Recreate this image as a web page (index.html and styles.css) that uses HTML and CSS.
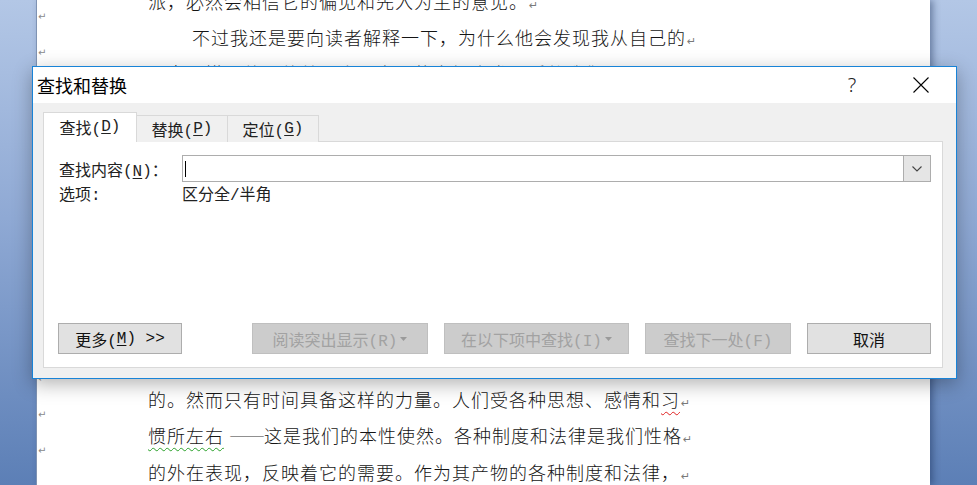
FILE: index.html
```html
<!DOCTYPE html>
<html lang="zh-CN">
<head>
<meta charset="utf-8">
<title>查找和替换</title>
<link rel="stylesheet" href="styles.css">
</head>
<body>
<div class="page">
  <div class="doc">
    <div class="line"><span class="pm"></span><span class="txt">派，必然会相信它的偏见和先入为主的意见。<span class="ret">↵</span></span></div>
    <div class="line"><span class="pm">↵</span><span class="txt indent">不过我还是要向读者解释一下，为什么他会发现我从自己的<span class="ret">↵</span></span></div>
    <div class="line"><span class="pm">↵</span><span class="txt">观点来描写他，他总是会从自己的立场出发来看待我们。<span class="ret">↵</span></span></div>
    <div class="line"><span class="pm"></span><span class="txt">我们每个人都是自己所处时代和环境的产物。<span class="ret">↵</span></span></div>
    <div class="line"><span class="pm"></span><span class="txt">这一点无论如何也改变不了。<span class="ret">↵</span></span></div>
    <div class="line"><span class="pm"></span><span class="txt">我们的思想和判断受到种种因素的影响。<span class="ret">↵</span></span></div>
    <div class="line"><span class="pm"></span><span class="txt">要摆脱这些影响，需要漫长的时间。<span class="ret">↵</span></span></div>
    <div class="line"><span class="pm"></span><span class="txt">一个民族的性格是在漫长的岁月中形成的。<span class="ret">↵</span></span></div>
    <div class="line"><span class="pm"></span><span class="txt">它的各种观念也是逐渐积累起来的。<span class="ret">↵</span></span></div>
    <div class="line"><span class="pm"></span><span class="txt">这些观念的改变同样需要时间。<span class="ret">↵</span></span></div>
    <div class="line"><span class="pm"></span><span class="txt">需要一代又一代人的努力，这是任何人都无法替代<span class="ret">↵</span></span></div>
    <div class="line"><span class="pm">↵</span><span class="txt">的。然而只有时间具备这样的力量。人们受各种思想、感情和<span class="wavy-red">习</span><span class="ret">↵</span></span></div>
    <div class="line"><span class="pm">↵</span><span class="txt"><span class="wavy-green">惯所左右</span> <span class="dash">——</span>这是我们的本性使然。各种制度和法律是我们性格<span class="ret">↵</span></span></div>
    <div class="line"><span class="pm">↵</span><span class="txt">的外在表现，反映着它的需要。作为其产物的各种制度和法律，<span class="ret">↵</span></span></div>
  </div>
</div>

<div class="dialog">
  <div class="titlebar">
    <span class="title">查找和替换</span>
    <span class="help">?</span>
    <span class="close">
      <svg width="16" height="16" viewBox="0 0 16 16"><path d="M0.5 0.5 L15.5 15.5 M15.5 0.5 L0.5 15.5" stroke="#000" stroke-width="1.1" fill="none"/></svg>
    </span>
  </div>
  <div class="body">
    <div class="tabs">
      <div class="tab active">查找(<u>D</u>)</div>
      <div class="tab">替换(<u>P</u>)</div>
      <div class="tab">定位(<u>G</u>)</div>
    </div>
    <div class="panel">
      <div class="row">
        <span class="label">查找内容(<u>N</u>)：</span>
        <div class="input">
          <span class="caret"></span>
          <span class="dd">
            <svg width="10" height="6" viewBox="0 0 10 6"><path d="M0.5 0.5 L5 5 L9.5 0.5" stroke="#444" stroke-width="1.1" fill="none"/></svg>
          </span>
        </div>
      </div>
      <div class="row opts">
        <span class="label">选项:</span>
        <span class="optval">区分全/半角</span>
      </div>
      <div class="buttons">
        <div class="btn w124">更多(<u>M</u>) &gt;&gt;</div>
        <div class="btn w176 dis push">阅读突出显示(R)<svg class="arr" width="7" height="4" viewBox="0 0 7 4"><path d="M0 0 H7 L3.5 4 Z" fill="#9a9a9a"/></svg></div>
        <div class="btn w185 dis">在以下项中查找(I)<svg class="arr" width="7" height="4" viewBox="0 0 7 4"><path d="M0 0 H7 L3.5 4 Z" fill="#9a9a9a"/></svg></div>
        <div class="btn w146 dis">查找下一处(F)</div>
        <div class="btn w124">取消</div>
      </div>
    </div>
  </div>
</div>
</body>
</html>
```

FILE: styles.css
```css
html, body {
  margin: 0;
  padding: 0;
}
body {
  width: 977px;
  height: 485px;
  overflow: hidden;
  position: relative;
  background: linear-gradient(to bottom, #b3c7e6 0%, #8fa9d4 45%, #5c7fb6 100%);
  font-family: "Noto Sans CJK SC", "Noto Sans", sans-serif;
}

/* background document page */
.page {
  margin-left: 37px;
  width: 893px;
  height: 485px;
  background: #fff;
  box-shadow: -1px 0 0 #7f93b3, 3px 0 7px rgba(20, 40, 80, 0.45);
  overflow: hidden;
}
.doc {
  margin-top: -17px;
  padding-left: 1px;
}
.line {
  height: 36.2px;
  display: flex;
  align-items: center;
}
.pm {
  width: 8px;
  height: 10px;
  flex: none;
  align-self: flex-start;
  font: 10px/10px "DejaVu Sans", sans-serif;
  color: #8a8a8a;
  margin-top: -7px;
}
.txt {
  margin-left: 102px;
  font-size: 18px;
  letter-spacing: 1px;
  color: #151515;
  white-space: nowrap;
  font-weight: 300;
}
.txt.indent {
  margin-left: 146px;
}
.ret {
  font: 11px "DejaVu Sans", sans-serif;
  color: #7a7a7a;
  letter-spacing: 0;
  margin-left: 1px;
}
.wavy-green {
  text-decoration: underline wavy #2aa02a;
  text-decoration-thickness: 1px;
  text-underline-offset: 4px;
}
.wavy-red {
  text-decoration: underline wavy #e02020;
  text-decoration-thickness: 1px;
  text-underline-offset: 4px;
}
.dash {
  color: #777;
  letter-spacing: -1px;
}

/* dialog */
.dialog {
  position: absolute;
  left: 32px;
  top: 66px;
  width: 923px;
  height: 311px;
  border: 1px solid #1883d7;
  background: #f0f0f0;
  box-shadow: 0 5px 18px rgba(0, 0, 0, 0.3);
  display: flex;
  flex-direction: column;
}
.titlebar {
  height: 36px;
  flex: none;
  background: #fff;
  display: flex;
  align-items: center;
  padding-right: 12px;
}
.title {
  padding-left: 4px;
  font-size: 18px;
  color: #000;
  font-family: "Noto Sans CJK SC", sans-serif;
}
.help {
  margin-left: auto;
  width: 46px;
  text-align: center;
  font: 300 20px/20px "Noto Sans", sans-serif;
  color: #222;
}
.close {
  margin-left: 23px;
  width: 46px;
  height: 16px;
  display: flex;
  justify-content: center;
}
.body {
  flex: 1;
  padding: 9px 13px 10px 10px;
  display: flex;
  flex-direction: column;
  font-family: "Liberation Mono", "Noto Sans CJK SC", monospace;
  font-size: 16px;
  color: #000;
}
u {
  text-underline-offset: 2px;
}
.tabs {
  display: flex;
  align-items: flex-start;
  height: 30px;
  margin-bottom: -1px;
  position: relative;
  z-index: 1;
}
.tab {
  box-sizing: border-box;
  width: 92px;
  height: 27px;
  margin-top: 3px;
  margin-left: -1px;
  border: 1px solid #d9d9d9;
  border-bottom: none;
  background: #f0f0f0;
  display: flex;
  align-items: center;
  justify-content: center;
  color: #222;
}
.tab.active {
  width: 94px;
  height: 30px;
  margin-top: 0;
  margin-left: 0;
  background: #fff;
  padding-bottom: 1px;
}
.panel {
  flex: 1;
  background: #fff;
  border: 1px solid #d9d9d9;
  padding: 13px 11px 13px 14px;
  display: flex;
  flex-direction: column;
}
.row {
  display: flex;
  align-items: center;
}
.label {
  width: 123px;
  padding-left: 1px;
  flex: none;
  color: #222;
}
.input {
  flex: 1;
  height: 27px;
  box-sizing: border-box;
  border: 1px solid #adadad;
  background: #fff;
  display: flex;
  align-items: center;
}
.caret {
  width: 1px;
  height: 16px;
  background: #000;
  margin-left: 2px;
}
.dd {
  margin-left: auto;
  width: 26px;
  height: 25px;
  border-left: 1px solid #adadad;
  background: #e5e5e5;
  display: flex;
  align-items: center;
  justify-content: center;
}
.opts {
  margin-top: 4px;
  line-height: 20px;
}
.optval {
  color: #222;
}
.buttons {
  margin-top: auto;
  display: flex;
  gap: 16px;
}
.btn {
  box-sizing: border-box;
  height: 31px;
  border: 1px solid #adadad;
  background: #e1e1e1;
  display: flex;
  align-items: center;
  justify-content: center;
  white-space: nowrap;
  color: #111;
}
.btn.dis {
  background: #cccccc;
  border-color: #bfbfbf;
  color: #a2a2a2;
}
.push {
  margin-left: auto;
}
.arr {
  margin-left: 3px;
}
.w124 { width: 124px; }
.w176 { width: 176px; }
.w185 { width: 185px; }
.w146 { width: 146px; }
```
